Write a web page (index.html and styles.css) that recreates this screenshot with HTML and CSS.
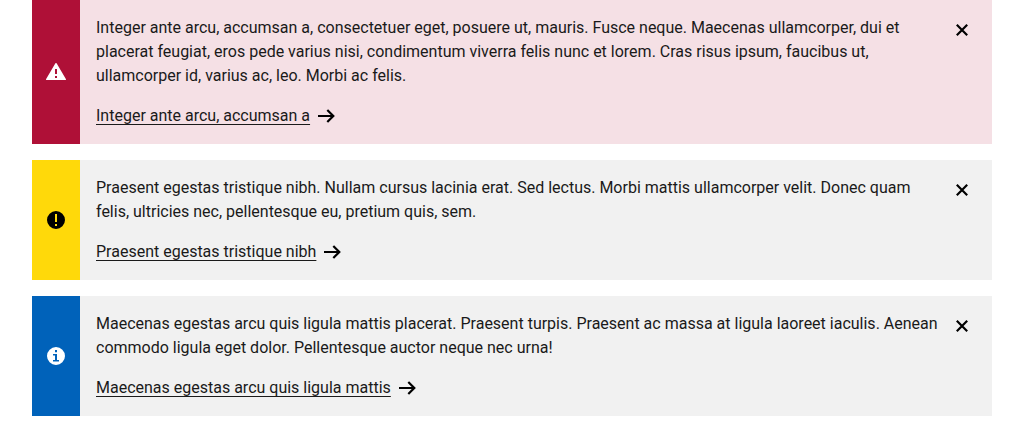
FILE: index.html
```html
<!DOCTYPE html>
<html lang="en">
<head>
<meta charset="utf-8">
<meta name="viewport" content="width=device-width, initial-scale=1">
<title>Notifications</title>
<link rel="stylesheet" href="styles.css">
</head>
<body>
<main class="alerts">
  <section class="alert alert-error">
    <div class="alert-status">
      <svg class="icon" viewBox="0 0 24 24" aria-hidden="true"><path fill="currentColor" fill-rule="evenodd" d="M11.400 3.300Q12 2.500 12.600 3.300L22 19.200Q22.300 20 21.500 20H2.500Q1.700 20 2 19.200ZM11 9v5h2V9ZM11 16v2h2v-2Z"/></svg>
    </div>
    <div class="alert-body">
      <p class="alert-text">Integer ante arcu, accumsan a, consectetuer eget, posuere ut, mauris. Fusce neque. Maecenas ullamcorper, dui et placerat feugiat, eros pede varius nisi, condimentum viverra felis nunc et lorem. Cras risus ipsum, faucibus ut, ullamcorper id, varius ac, leo. Morbi ac felis.</p>
      <a class="alert-link" href="#"><span class="alert-link-label">Integer ante arcu, accumsan a</span><svg class="arrow" viewBox="0 0 18 24" aria-hidden="true"><path d="M0 12h15M9.300 6l6 6-6 6" fill="none" stroke="currentColor" stroke-width="2.2"/></svg></a>
    </div>
    <button class="alert-close" type="button" aria-label="Close"><svg class="icon" viewBox="0 0 24 24" aria-hidden="true"><path d="m6.800 6.800 10.400 10.400M17.200 6.800 6.800 17.200" fill="none" stroke="currentColor" stroke-width="2.2"/></svg></button>
  </section>
  <section class="alert alert-warning">
    <div class="alert-status">
      <svg class="icon" viewBox="0 0 24 24" aria-hidden="true"><path fill="currentColor" fill-rule="evenodd" d="M12 3a9 9 0 1 0 0 18 9 9 0 0 0 0-18ZM11 6v8h2V6ZM11 16v2h2v-2Z"/></svg>
    </div>
    <div class="alert-body">
      <p class="alert-text">Praesent egestas tristique nibh. Nullam cursus lacinia erat. Sed lectus. Morbi mattis ullamcorper velit. Donec quam felis, ultricies nec, pellentesque eu, pretium quis, sem.</p>
      <a class="alert-link" href="#"><span class="alert-link-label">Praesent egestas tristique nibh</span><svg class="arrow" viewBox="0 0 18 24" aria-hidden="true"><path d="M0 12h15M9.300 6l6 6-6 6" fill="none" stroke="currentColor" stroke-width="2.2"/></svg></a>
    </div>
    <button class="alert-close" type="button" aria-label="Close"><svg class="icon" viewBox="0 0 24 24" aria-hidden="true"><path d="m6.800 6.800 10.400 10.400M17.200 6.800 6.800 17.200" fill="none" stroke="currentColor" stroke-width="2.2"/></svg></button>
  </section>
  <section class="alert alert-info">
    <div class="alert-status">
      <svg class="icon" viewBox="0 0 24 24" aria-hidden="true"><path fill="currentColor" fill-rule="evenodd" d="M12 3a9 9 0 1 0 0 18 9 9 0 0 0 0-18ZM11 6v2.200h2V6ZM9 10v1.600h2V16H9v1.600h6V16h-2v-6Z"/></svg>
    </div>
    <div class="alert-body">
      <p class="alert-text">Maecenas egestas arcu quis ligula mattis placerat. Praesent turpis. Praesent ac massa at ligula laoreet iaculis. Aenean commodo ligula eget dolor. Pellentesque auctor neque nec urna!</p>
      <a class="alert-link" href="#"><span class="alert-link-label">Maecenas egestas arcu quis ligula mattis</span><svg class="arrow" viewBox="0 0 18 24" aria-hidden="true"><path d="M0 12h15M9.300 6l6 6-6 6" fill="none" stroke="currentColor" stroke-width="2.2"/></svg></a>
    </div>
    <button class="alert-close" type="button" aria-label="Close"><svg class="icon" viewBox="0 0 24 24" aria-hidden="true"><path d="m6.800 6.800 10.400 10.400M17.200 6.800 6.800 17.200" fill="none" stroke="currentColor" stroke-width="2.2"/></svg></button>
  </section>
</main>
</body>
</html>
```
FILE: styles.css
```css
* {
  box-sizing: border-box;
}

body {
  margin: 0;
  background: #fff;
  color: #1a1a1a;
  font-family: Roboto, "Liberation Sans", sans-serif;
  font-size: 16px;
  line-height: 24px;
}

.alerts {
  display: flex;
  flex-direction: column;
  gap: 16px;
  padding: 0 32px 16px;
}

.alert {
  display: grid;
  grid-template-columns: 48px 1fr auto;
  background: #f1f1f1;
}

.alert-error {
  background: #f5e0e5;
}

.alert-status {
  display: flex;
  align-items: center;
  justify-content: center;
  color: #fff;
}

.alert-error .alert-status {
  background: #af1037;
}

.alert-warning .alert-status {
  background: #ffd90a;
  color: #000;
}

.alert-info .alert-status {
  background: #0062ba;
}

.icon {
  display: block;
  width: 24px;
  height: 24px;
}

.alert-body {
  display: flex;
  flex-direction: column;
  align-items: flex-start;
  gap: 16px;
  padding: 16px 0 16px 16px;
}

.alert-text {
  margin: 0;
}

.alert-link {
  display: flex;
  gap: 8px;
  color: inherit;
  text-decoration: none;
}

.alert-link-label {
  text-decoration: underline;
  text-decoration-skip-ink: none;
  text-decoration-thickness: 1px;
  text-underline-offset: 3px;
}

.arrow {
  flex: none;
  width: 18px;
  height: 24px;
  color: #000;
}

.alert-close {
  align-self: start;
  padding: 18px 18px 18px 8px;
  border: 0;
  background: none;
  color: #000;
  cursor: pointer;
}
```
